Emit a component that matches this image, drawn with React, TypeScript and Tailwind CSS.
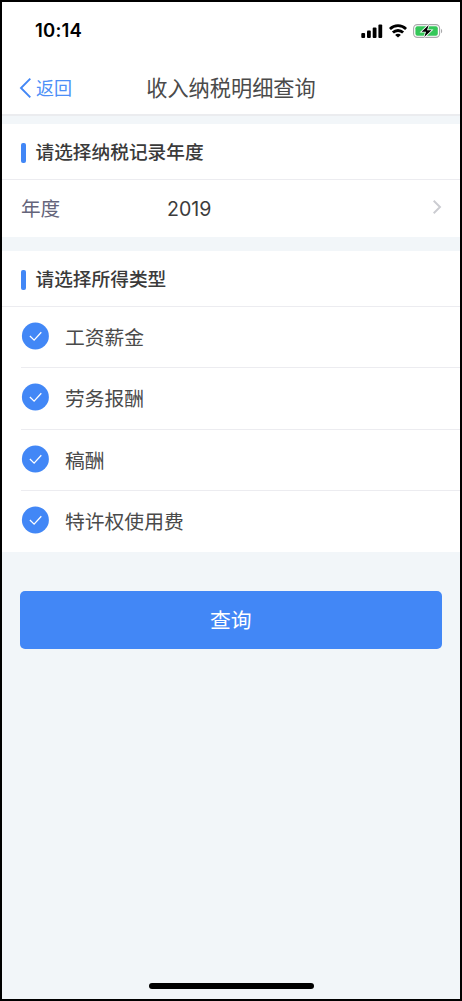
import React, { useState } from "react";

const incomeTypes = ["工资薪金", "劳务报酬", "稿酬", "特许权使用费"];

const StatusBar = () => (
  <div className="flex h-[58px] items-center justify-between pl-[33px] pr-[17px]">
    <p className="pb-[2px] font-['Inter',sans-serif] text-[18.5px] font-semibold leading-none tracking-[0.2px] text-black">
      10:14
    </p>

    <div className="flex items-center">
      {/* Signal */}
      <svg width="22" height="14" viewBox="0 0 22 14" fill="#000">
        <rect x="0.3" y="9" width="3.8" height="5" rx="1" />
        <rect x="6" y="6.5" width="3.8" height="7.5" rx="1" />
        <rect x="11.7" y="3.6" width="3.8" height="10.4" rx="1" />
        <rect x="17.4" y="0.4" width="3.8" height="13.6" rx="1" />
      </svg>

      {/* Wifi */}
      <svg className="ml-[6px]" width="18" height="14" viewBox="0 0 18 14" fill="none" stroke="#000" strokeWidth="2.8">
        <path d="M0.9 5C5.4 0.4 12.6 0.4 17.1 5" />
        <path d="M3.9 8.6C6.7 5.8 11.3 5.8 14.1 8.6" />
        <path d="M9 13.6L6.1 10.9C7.6 9.5 10.4 9.5 11.9 10.9Z" fill="#000" stroke="none" />
      </svg>

      {/* Battery, charging */}
      <svg className="ml-[6px]" width="30" height="14" viewBox="0 0 30 14">
        <rect x="0.6" y="0.6" width="26" height="12.8" rx="3.8" fill="#fff" stroke="#a9a9ab" strokeWidth="1.1" />
        <rect x="2.4" y="2.3" width="22.4" height="9.4" rx="2" fill="#34c759" />
        <path d="M28 4.7C29.6 5.4 29.6 8.6 28 9.3Z" fill="#a9a9ab" />
        <path d="M15.7 0.9L8.6 7.7H13L11.3 13.1L18.5 6.2H14Z" fill="#000" stroke="#fff" strokeWidth="1.6" paintOrder="stroke" />
      </svg>
    </div>
  </div>
);

const SectionTitle = ({ children }: { children: React.ReactNode }) => (
  <div className="flex h-[56px] items-center border-b border-[#ececf0] pl-[18.5px] pt-[2px]">
    <span className="h-[20px] w-[5px] rounded-[2px] bg-[#4287f6]" />
    <h2 className="ml-[10px] pt-[2px] text-[18.7px] font-medium leading-none text-[#3a3a3a]">
      {children}
    </h2>
  </div>
);

const CheckMark = ({ checked }: { checked: boolean }) => (
  <svg className="mb-[2px]" width="28" height="28" viewBox="0 0 28 28" fill="none">
    <circle cx="14.4" cy="14" r="13.5" fill={checked ? "#4287f6" : "#d5d7dc"} />
    <path d="M8.9 14L13.1 18.1L20.3 10.3" stroke="#fff" strokeWidth="1.3" />
  </svg>
);

const App = () => {
  const [selected, setSelected] = useState<string[]>(incomeTypes);

  const toggle = (type: string) => {
    setSelected((prev) =>
      prev.includes(type) ? prev.filter((t) => t !== type) : [...prev, type]
    );
  };

  return (
    <div className="flex h-[1001px] w-[462px] flex-col border-2 border-black bg-[#f2f6f9] font-['Inter','Noto_Sans_CJK_SC',sans-serif]">
      {/* Header */}
      <header className="h-[114px] shrink-0 border-b-2 border-[#ebecef] bg-white">
        <StatusBar />
        <div className="grid h-[55px] grid-cols-[1fr_auto_1fr] items-center">
          <button className="flex items-center pl-[17px] text-[18px] leading-none text-[#4d8ff7]">
            <svg width="13" height="20" viewBox="0 0 13 20" fill="none" stroke="#4287f6" strokeWidth="1.9">
              <path d="M11.3 0.7L2 10L11.3 19.3" />
            </svg>
            <span className="ml-[4px] pt-[2px]">返回</span>
          </button>
          <h1 className="pt-[2px] text-[21.2px] leading-none text-[#4a4a4a]">
            收入纳税明细查询
          </h1>
        </div>
      </header>

      {/* Year */}
      <section className="mt-[8px] shrink-0 bg-white">
        <SectionTitle>请选择纳税记录年度</SectionTitle>
        <button className="flex h-[57px] w-full items-center pl-[19px] pr-[18px] text-left text-[19.6px] leading-none">
          <span className="w-[146px] pt-[2px] text-[#64647a]">年度</span>
          <span className="flex-1 pt-[2px] text-[#3c3c3c]">2019</span>
          <svg className="mb-[4px]" width="10" height="14" viewBox="0 0 10 14" fill="none" stroke="#cbccd1" strokeWidth="1.9">
            <path d="M1.7 0.8L8 7L1.7 13.2" />
          </svg>
        </button>
      </section>

      {/* Income types */}
      <section className="mt-[14px] shrink-0 bg-white">
        <SectionTitle>请选择所得类型</SectionTitle>
        <ul className="pl-[18.5px]">
          {incomeTypes.map((type) => (
            <li key={type} className="h-[61.25px] border-b border-[#ececf0] last:border-0">
              <button
                onClick={() => toggle(type)}
                className="flex h-full w-full items-center pl-[0.5px] text-left text-[19.8px] leading-none text-[#4a4a4a]"
              >
                <CheckMark checked={selected.includes(type)} />
                <span className="ml-[16px] pt-[4px]">{type}</span>
              </button>
            </li>
          ))}
        </ul>
      </section>

      <button className="ml-[18px] mr-[18.5px] mt-[39px] h-[58px] shrink-0 rounded-[5px] bg-[#4287f6] pt-[2px] text-[20.8px] leading-none text-white">
        查询
      </button>

      {/* Home indicator */}
      <div className="mb-[10px] ml-[147px] mt-auto h-[6px] w-[165px] rounded-full bg-black" />
    </div>
  );
};

export default App;
